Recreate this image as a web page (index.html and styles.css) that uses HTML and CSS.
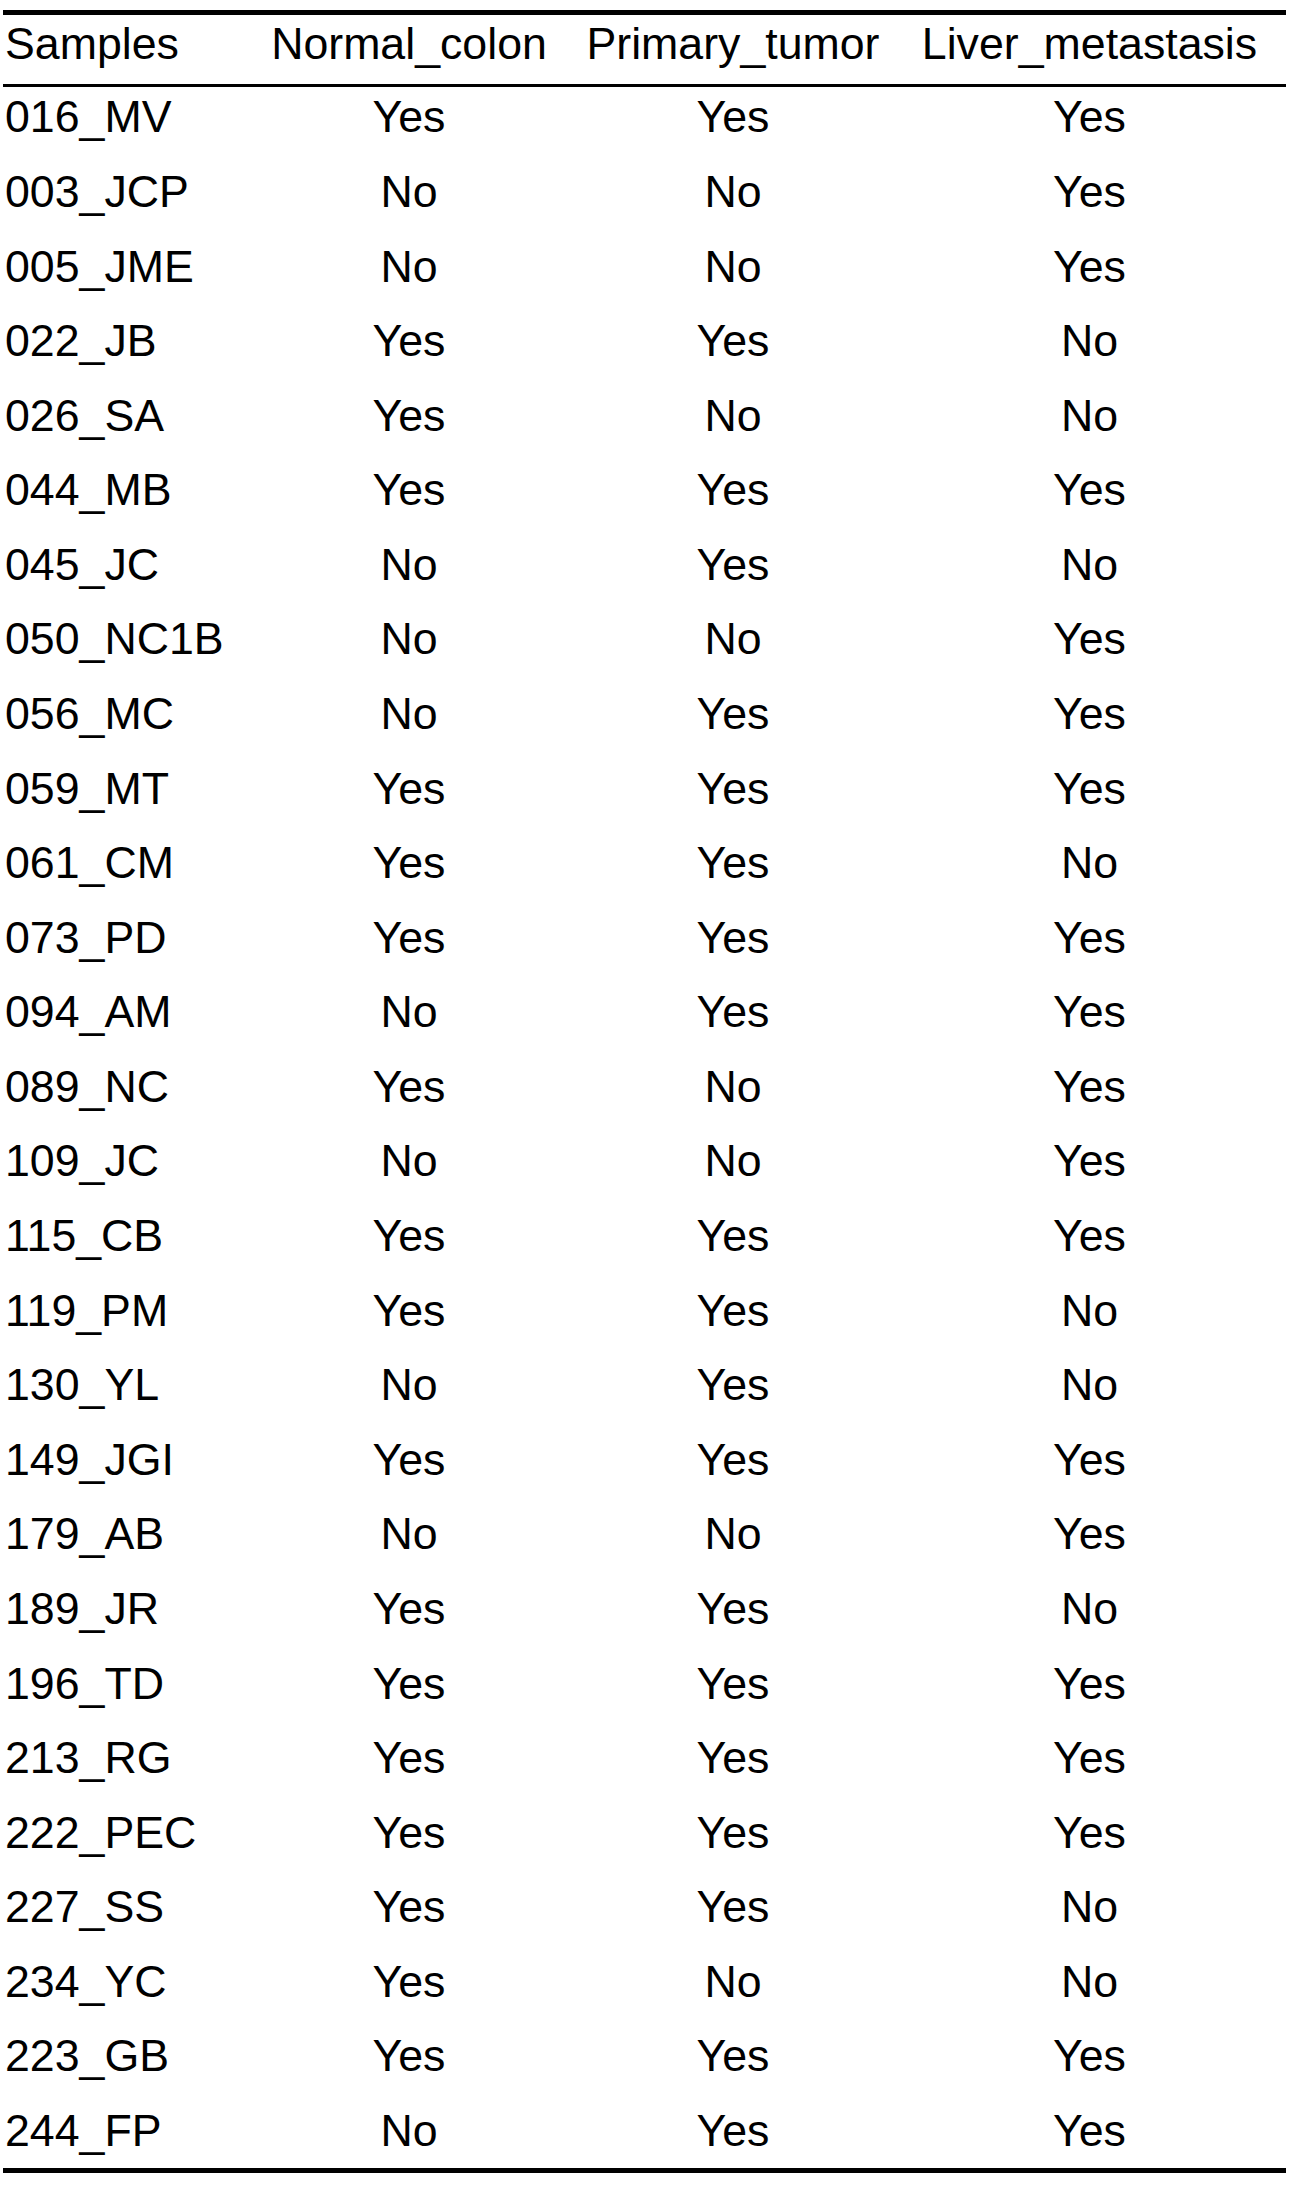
FILE: index.html
```html
<!DOCTYPE html>
<html lang="en">
<head>
<meta charset="utf-8">
<title>Samples</title>
<link rel="stylesheet" href="styles.css">
</head>
<body>
<table class="samples">
  <colgroup>
    <col class="c1"><col class="c2"><col class="c3"><col class="c4">
  </colgroup>
  <thead>
    <tr><th class="left">Samples</th><th>Normal_colon</th><th>Primary_tumor</th><th>Liver_metastasis</th></tr>
  </thead>
  <tbody>
    <tr><td class="left">016_MV</td><td>Yes</td><td>Yes</td><td>Yes</td></tr>
    <tr><td class="left">003_JCP</td><td>No</td><td>No</td><td>Yes</td></tr>
    <tr><td class="left">005_JME</td><td>No</td><td>No</td><td>Yes</td></tr>
    <tr><td class="left">022_JB</td><td>Yes</td><td>Yes</td><td>No</td></tr>
    <tr><td class="left">026_SA</td><td>Yes</td><td>No</td><td>No</td></tr>
    <tr><td class="left">044_MB</td><td>Yes</td><td>Yes</td><td>Yes</td></tr>
    <tr><td class="left">045_JC</td><td>No</td><td>Yes</td><td>No</td></tr>
    <tr><td class="left">050_NC1B</td><td>No</td><td>No</td><td>Yes</td></tr>
    <tr><td class="left">056_MC</td><td>No</td><td>Yes</td><td>Yes</td></tr>
    <tr><td class="left">059_MT</td><td>Yes</td><td>Yes</td><td>Yes</td></tr>
    <tr><td class="left">061_CM</td><td>Yes</td><td>Yes</td><td>No</td></tr>
    <tr><td class="left">073_PD</td><td>Yes</td><td>Yes</td><td>Yes</td></tr>
    <tr><td class="left">094_AM</td><td>No</td><td>Yes</td><td>Yes</td></tr>
    <tr><td class="left">089_NC</td><td>Yes</td><td>No</td><td>Yes</td></tr>
    <tr><td class="left">109_JC</td><td>No</td><td>No</td><td>Yes</td></tr>
    <tr><td class="left">115_CB</td><td>Yes</td><td>Yes</td><td>Yes</td></tr>
    <tr><td class="left">119_PM</td><td>Yes</td><td>Yes</td><td>No</td></tr>
    <tr><td class="left">130_YL</td><td>No</td><td>Yes</td><td>No</td></tr>
    <tr><td class="left">149_JGI</td><td>Yes</td><td>Yes</td><td>Yes</td></tr>
    <tr><td class="left">179_AB</td><td>No</td><td>No</td><td>Yes</td></tr>
    <tr><td class="left">189_JR</td><td>Yes</td><td>Yes</td><td>No</td></tr>
    <tr><td class="left">196_TD</td><td>Yes</td><td>Yes</td><td>Yes</td></tr>
    <tr><td class="left">213_RG</td><td>Yes</td><td>Yes</td><td>Yes</td></tr>
    <tr><td class="left">222_PEC</td><td>Yes</td><td>Yes</td><td>Yes</td></tr>
    <tr><td class="left">227_SS</td><td>Yes</td><td>Yes</td><td>No</td></tr>
    <tr><td class="left">234_YC</td><td>Yes</td><td>No</td><td>No</td></tr>
    <tr><td class="left">223_GB</td><td>Yes</td><td>Yes</td><td>Yes</td></tr>
    <tr><td class="left">244_FP</td><td>No</td><td>Yes</td><td>Yes</td></tr>
  </tbody>
</table>
</body>
</html>
```
FILE: styles.css
```css
html, body {
  margin: 0;
  padding: 0;
  background: #ffffff;
}

body {
  padding: 10px 0 0 3px;
  font-family: "Liberation Sans", Arial, Helvetica, sans-serif;
  color: #000000;
}

.samples {
  border-collapse: separate;
  border-spacing: 0;
  table-layout: fixed;
  width: 1283px;
  font-size: 44.7px;
  line-height: 44.7px;
}

.c1 { width: 252px; }
.c2 { width: 318px; }
.c3 { width: 330px; }
.c4 { width: 383px; }

.samples th,
.samples td {
  font-weight: normal;
  text-align: center;
  white-space: nowrap;
  padding: 15.7px 10px 14.2px 0;
  vertical-align: top;
}

.samples th {
  border-top: 5px solid #000000;
  border-bottom: 3px solid #000000;
  padding-top: 6.5px;
  padding-bottom: 17.8px;
}

.samples .left {
  text-align: left;
  padding-left: 2px;
  padding-right: 0;
}

.samples tbody tr:first-child td {
  padding-top: 8.4px;
}

.samples tbody tr:last-child td {
  border-bottom: 5px solid #000000;
}
```
